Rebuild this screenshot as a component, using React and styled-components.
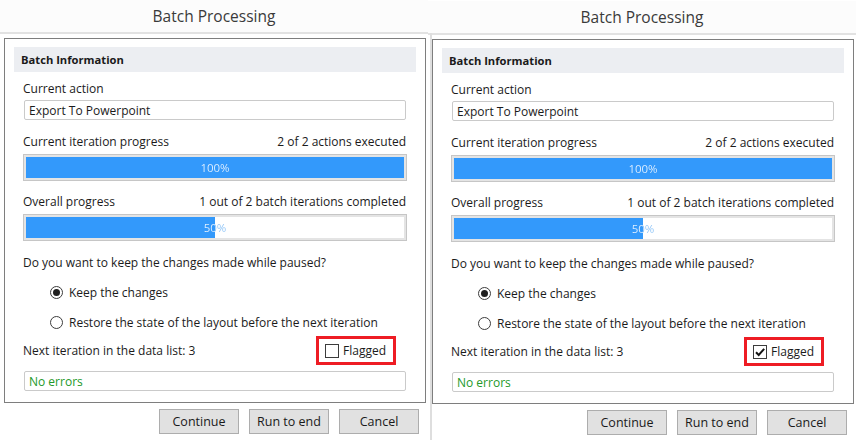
import React from 'react';
import styled, { createGlobalStyle } from 'styled-components';

const Global = createGlobalStyle`
html, body {
margin: 0;
padding: 0;
background: #ffffff;
}
body {
font-family: "Open Sans", "Noto Sans", sans-serif;
color: #1b1b1b;
}
`;

const Page = styled.div`
display: flex;
width: 856px;
height: 440px;
overflow: hidden;
background: #ffffff;
`;

const Dialog = styled.section`
position: relative;
width: 428px;
flex: none;
display: flex;
flex-direction: column;
padding-top: ${p => p.$shift || 0}px;
box-sizing: border-box;
&::before {
content: ${p => (p.$divider ? '""' : 'none')};
position: absolute;
left: 2px;
top: ${p => 32 + (p.$shift || 0)}px;
bottom: 0;
width: 2px;
background: #dedede;
}
`;

const TitleBar = styled.header`
height: 32px;
display: flex;
align-items: center;
justify-content: center;
font-size: 15.5px;
color: #3a3a3a;
border-bottom: 2px solid #e2e2e2;
background: #fcfcfc;
`;

const Frame = styled.div`
margin: 4px 2px 0 4px;
border: 1px solid #7e7e7e;
padding: 8px 9px 11px 9px;
`;

const SectionHeader = styled.div`
height: 25px;
display: flex;
align-items: center;
padding-left: 7px;
background: #eceef2;
font-size: 11.2px;
font-weight: 700;
color: #1a1a1a;
`;

const Body = styled.div`
display: flex;
flex-direction: column;
padding: 0 10px;
font-size: 12px;
`;

const Label = styled.div`
line-height: 16px;
margin-top: ${p => p.$gap}px;
margin-left: -1px;
display: flex;
justify-content: space-between;
`;

const Field = styled.div`
height: 18px;
margin-top: ${p => p.$gap}px;
border: 1px solid #cacaca;
border-radius: 2px;
display: flex;
align-items: center;
padding-left: 4px;
color: ${p => p.$color || '#1b1b1b'};
`;

const Bar = styled.div`
position: relative;
height: 21px;
margin: 4px -1px 0 -1px;
border: 1px solid #c6c6c6;
padding: 2px;
background: #ffffff;
box-shadow: inset 0 0 0 2px #e4e4e4;
`;

const Fill = styled.div`
height: 100%;
background: #3399fb;
`;

const BarText = styled.span`
position: absolute;
inset: 0;
display: flex;
align-items: center;
justify-content: center;
font-size: 11.5px;
background: linear-gradient(to right, #e4f1ff ${p => p.$pct}%, #8cc3f7 ${p => p.$pct}%);
-webkit-background-clip: text;
background-clip: text;
color: transparent;
`;

const RadioRow = styled.label`
display: flex;
align-items: center;
gap: 6px;
height: 20px;
margin-top: ${p => p.$gap}px;
margin-left: 26px;
`;

const RadioDot = styled.span`
width: 13px;
height: 13px;
flex: none;
box-sizing: border-box;
border-radius: 50%;
border: 1px solid #3c3c3c;
background: #ffffff;
display: flex;
align-items: center;
justify-content: center;
&::after {
content: "";
width: 7px;
height: 7px;
border-radius: 50%;
background: #1f1f1f;
display: ${p => (p.$checked ? 'block' : 'none')};
}
`;

const NextRow = styled.div`
display: flex;
align-items: center;
justify-content: space-between;
margin-top: 4px;
margin-left: -1px;
`;

const Highlight = styled.label`
display: flex;
align-items: center;
gap: 4px;
height: 23px;
padding: 0 7px 0 6px;
margin-right: 10px;
border: 3px solid #ee1c24;
`;

const CheckBox = styled.span`
width: 14px;
height: 14px;
flex: none;
box-sizing: border-box;
border: 1px solid #3c3c3c;
background: #ffffff;
display: flex;
align-items: center;
justify-content: center;
`;

const ButtonRow = styled.div`
display: flex;
justify-content: flex-end;
gap: 10px;
margin-top: 6px;
padding-right: 9px;
`;

const Button = styled.button`
width: 80px;
height: 25px;
background: #e1e1e1;
border: 1px solid #adadad;
border-radius: 0;
font-family: "Open Sans", "Noto Sans", sans-serif;
font-size: 12.5px;
color: #1a1a1a;
padding: 0;
`;

function Check() {
    return (
        <svg width="12" height="12" viewBox="0 0 12 12">
            <path d="M2 6.3 L4.7 9 L10.2 2.8" fill="none" stroke="#141414" strokeWidth="2" />
        </svg>
    );
}

function BatchDialog({ flagged, divider, shift }) {
    return (
        <Dialog $divider={divider} $shift={shift}>
            <TitleBar>Batch Processing</TitleBar>
            <Frame>
                <SectionHeader>Batch Information</SectionHeader>
                <Body>
                    <Label $gap={9}>Current action</Label>
                    <Field $gap={3}>Export To Powerpoint</Field>
                    <Label $gap={14}>
                        <span>Current iteration progress</span>
                        <span>2 of 2 actions executed</span>
                    </Label>
                    <Bar>
                        <Fill style={{ width: '100%' }} />
                        <BarText $pct={100}>100%</BarText>
                    </Bar>
                    <Label $gap={13}>
                        <span>Overall progress</span>
                        <span>1 out of 2 batch iterations completed</span>
                    </Label>
                    <Bar>
                        <Fill style={{ width: '50%' }} />
                        <BarText $pct={50}>50%</BarText>
                    </Bar>
                    <Label $gap={14}>Do you want to keep the changes made while paused?</Label>
                    <RadioRow $gap={11}>
                        <RadioDot $checked />
                        Keep the changes
                    </RadioRow>
                    <RadioRow $gap={10}>
                        <RadioDot />
                        Restore the state of the layout before the next iteration
                    </RadioRow>
                    <NextRow>
                        <span>Next iteration in the data list: 3</span>
                        <Highlight>
                            <CheckBox>{flagged && <Check />}</CheckBox>
                            Flagged
                        </Highlight>
                    </NextRow>
                    <Field $gap={6} $color="#23992a">No errors</Field>
                </Body>
            </Frame>
            <ButtonRow>
                <Button>Continue</Button>
                <Button>Run to end</Button>
                <Button>Cancel</Button>
            </ButtonRow>
        </Dialog>
    );
}

export default function App() {
    return (
        <>
            <Global />
            <Page>
                <BatchDialog />
                <BatchDialog flagged divider shift={1} />
            </Page>
        </>
    );
}
